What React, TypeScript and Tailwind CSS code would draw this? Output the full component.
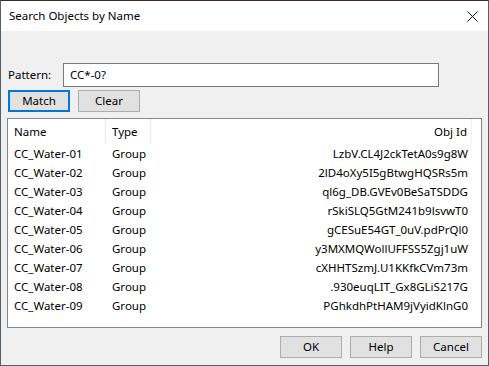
import React from 'react';

const rows = [
  ['CC_Water-01', 'Group', 'LzbV.CL4J2ckTetA0s9g8W'],
  ['CC_Water-02', 'Group', '2lD4oXy5I5gBtwgHQSRs5m'],
  ['CC_Water-03', 'Group', 'ql6g_DB.GVEv0BeSaTSDDG'],
  ['CC_Water-04', 'Group', 'rSkiSLQ5GtM241b9lsvwT0'],
  ['CC_Water-05', 'Group', 'gCESuE54GT_0uV.pdPrQl0'],
  ['CC_Water-06', 'Group', 'y3MXMQWollUFFSS5Zgj1uW'],
  ['CC_Water-07', 'Group', 'cXHHTSzmJ.U1KKfkCVm73m'],
  ['CC_Water-08', 'Group', '.930euqLIT_Gx8GLiS217G'],
  ['CC_Water-09', 'Group', 'PGhkdhPtHAM9jVyidKlnG0'],
];

const Btn: React.FC<{ label: string; focused?: boolean }> = ({ label, focused }) => (
  <button
    className={`w-[62px] h-[22px] flex items-center justify-center bg-[#e1e1e1] text-black ${
      focused ? 'border-2 border-[#0078d7]' : 'border border-[#adadad]'
    }`}
  >
    {label}
  </button>
);

export default function App() {
  return (
    <div
      className="w-[489px] h-[366px] bg-[#f0f0f0] border border-[#55606b] border-t-[#3b3029] flex flex-col text-[11.5px] text-black"
      style={{ fontFamily: '"Noto Sans", "Liberation Sans", sans-serif' }}
    >
      <div className="h-[30px] bg-white flex items-center justify-between pl-[8px] pr-[9px]">
        <span className="text-[11.5px] leading-none -mt-[1px]">Search Objects by Name</span>
        <svg width="11" height="11" viewBox="0 0 11 11" className="mr-[1px]">
          <path d="M0.5 0.5 L10.5 10.5 M10.5 0.5 L0.5 10.5" stroke="#111" strokeWidth="1" />
        </svg>
      </div>

      <div className="flex-1 flex flex-col px-[6px]">
        <div className="flex items-center mt-[32px] h-[24px]">
          <span className="w-[56px] pl-[1px]">Pattern:</span>
          <div className="w-[376px] h-[24px] bg-white border border-[#7a7a7a] flex items-center pl-[6px]">
            CC*-0?
          </div>
        </div>

        <div className="flex gap-[8px] mt-[3px] pl-[1px]">
          <Btn label="Match" focused />
          <Btn label="Clear" />
        </div>

        <div className="mt-[6px] h-[210px] bg-white border border-[#828790] flex flex-col">
          <div className="flex h-[25px] items-center">
            <div className="w-[98px] pl-[6px] h-full flex items-center border-r border-[#e5e5e5]">Name</div>
            <div className="w-[45px] pl-[6px] h-full flex items-center border-r border-[#e5e5e5]">Type</div>
            <div className="w-[321px] pr-[4px] h-full flex items-center justify-end border-r border-[#f0f0f0]">
              Obj Id
            </div>
          </div>
          {rows.map(([name, type, id]) => (
            <div key={name} className="flex h-[19px] items-center">
              <div className="w-[98px] pl-[6px]">{name}</div>
              <div className="w-[45px] pl-[6px]">{type}</div>
              <div className="w-[321px] pr-[4px] text-right">{id}</div>
            </div>
          ))}
        </div>

        <div className="flex justify-end gap-[8px] mt-[8px]">
          <Btn label="OK" />
          <Btn label="Help" />
          <Btn label="Cancel" />
        </div>
      </div>
    </div>
  );
}
